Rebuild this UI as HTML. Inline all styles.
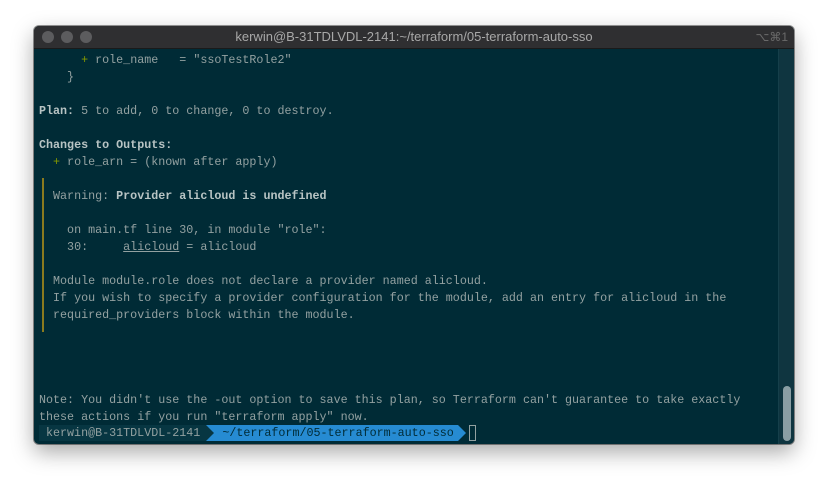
<!DOCTYPE html>
<html><head><meta charset="utf-8"><style>
body{margin:0;width:828px;height:486px;background:#fff;position:relative;overflow:hidden;font-family:"Liberation Mono",monospace;}
.win{position:absolute;left:34px;top:26px;width:760px;height:418px;border-radius:5px;overflow:hidden;box-shadow:0 8px 22px rgba(0,0,0,.35),0 0 0 1px rgba(0,0,0,.4);background:#002b36;}
.tb{height:22px;background:#2f2f31;border-bottom:1px solid #1a1a1a;position:relative;font-family:"Liberation Sans",sans-serif;font-size:13px;color:#a8a8a8;text-align:center;line-height:22px;}
.dot{position:absolute;top:5px;width:12px;height:12px;border-radius:50%;background:#5c5c5e;}
.kb{position:absolute;right:6px;top:0;font-size:12px;color:#6a6a6a;}
.sb{position:absolute;right:0;top:23px;width:15px;bottom:0;background:#0f3540;border-left:1px solid #153f4a;}
.th{position:absolute;left:4px;width:8px;top:337px;height:55px;border-radius:4px;background:#8a9ea4;}
pre{margin:0;position:absolute;left:5px;top:26px;font-family:"Liberation Mono",monospace;font-size:11.7px;line-height:17px;color:#93a1a1;}
b{color:#b8c4c4;}
.g{color:#859900;}
.bar{position:absolute;left:8px;top:152px;width:2px;height:154px;background:#8a7a1e;}
u{text-decoration:underline;}
.pr{position:absolute;left:5px;top:399px;height:16px;display:flex;font-family:"Liberation Mono",monospace;font-size:11.7px;line-height:16px;}
.p1{background:#073642;color:#93a1a1;padding:0 6px 0 7px;}
.p2{background:#268bd2;color:#002b36;padding:0 4px 0 8px;position:relative;}
.a1{width:0;height:0;border-top:8px solid transparent;border-bottom:8px solid transparent;border-left:8px solid #073642;background:#268bd2;}
.a2{width:0;height:0;border-top:8px solid transparent;border-bottom:8px solid transparent;border-left:8px solid #268bd2;}
.cur{display:inline-block;width:5px;height:14px;border:1px solid #93a1a1;margin-left:3px;margin-top:0px;}
</style></head><body>
<div class="win">
<div class="tb"><span class="dot" style="left:8px"></span><span class="dot" style="left:27px"></span><span class="dot" style="left:46px"></span>kerwin@B-31TDLVDL-2141:~/terraform/05-terraform-auto-sso<span class="kb">⌥⌘1</span></div>
<div class="bar"></div>
<pre>      <span class="g">+</span> role_name   = "ssoTestRole2"
    }

<b>Plan:</b> 5 to add, 0 to change, 0 to destroy.

<b>Changes to Outputs:</b>
  <span class="g">+</span> role_arn = (known after apply)

  Warning: <b>Provider alicloud is undefined</b>

    on main.tf line 30, in module "role":
    30:     <u>alicloud</u> = alicloud

  Module module.role does not declare a provider named alicloud.
  If you wish to specify a provider configuration for the module, add an entry for alicloud in the
  required_providers block within the module.




Note: You didn't use the -out option to save this plan, so Terraform can't guarantee to take exactly
these actions if you run "terraform apply" now.</pre>
<div class="pr"><span class="p1">kerwin@B-31TDLVDL-2141</span><span class="a1"></span><span class="p2">~/terraform/05-terraform-auto-sso</span><span class="a2"></span><span class="cur"></span></div>
<div class="sb"><div class="th"></div></div>
</div>
</body></html>
